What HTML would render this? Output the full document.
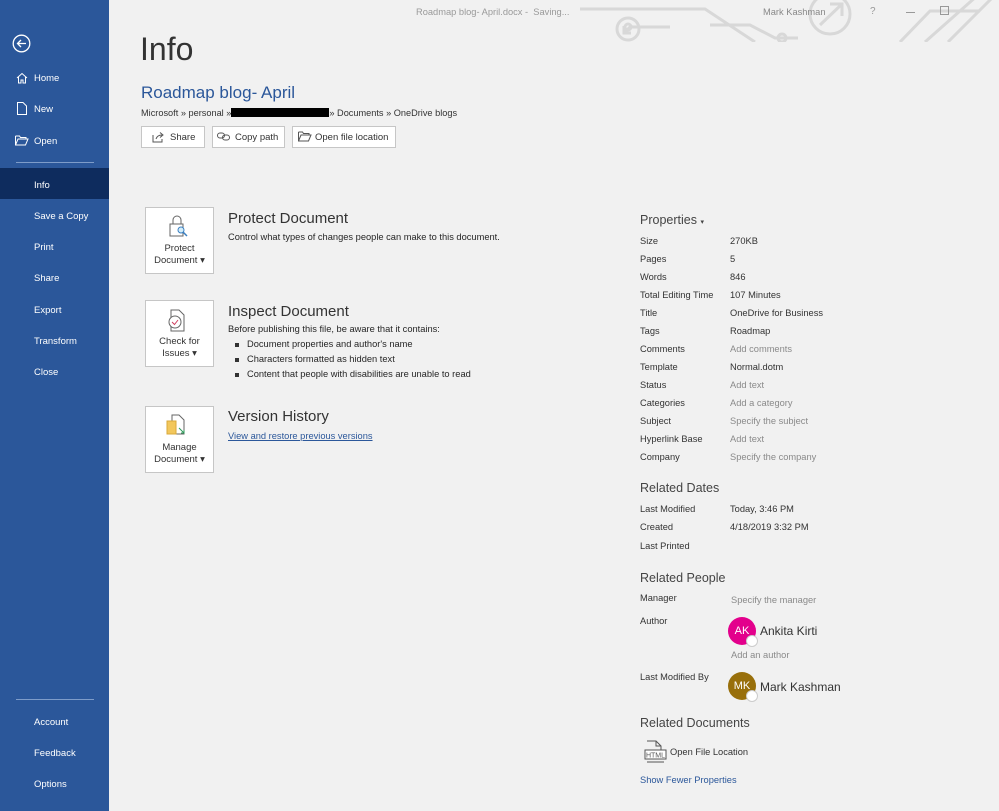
<!DOCTYPE html>
<html><head><style>
*{margin:0;padding:0;box-sizing:border-box}
body{width:999px;height:811px;background:#f1f1f1;font-family:"Liberation Sans",sans-serif;position:relative;overflow:hidden;color:#262626}
.a{position:absolute;white-space:nowrap}
#sb{position:absolute;left:0;top:0;width:109px;height:811px;background:#2b579a;color:#fff;font-size:9.5px}
#sb .a{color:#fff}
.sel{position:absolute;left:0;top:168px;width:109px;height:31px;background:#0e2c5e}
.line{position:absolute;left:16px;width:78px;height:1px;background:#7e9cc9}
.btn{position:absolute;height:22px;background:#fff;border:1px solid #c6c6c6;font-size:9.5px;line-height:21px;padding-left:22px;color:#333}
.big{position:absolute;left:145px;width:69px;height:67px;background:#fff;border:1px solid #c6c6c6;font-size:9.5px;text-align:center;color:#333;line-height:12px}
.h{font-size:15px;color:#333}
.t{font-size:9.3px;color:#262626}
.pl{position:absolute;left:640px;font-size:9.3px;color:#333}
.pv{position:absolute;left:730px;font-size:9.3px;color:#333}
.g{color:#8a8a8a}
.hd{position:absolute;left:640px;font-size:12.5px;color:#444}
.av{position:absolute;left:728px;width:28px;height:28px;border-radius:50%;color:#fff;font-size:11px;text-align:center;line-height:28px}
.av::after{content:"";position:absolute;right:-2px;bottom:-2px;width:10px;height:10px;border-radius:50%;background:#fff;border:1px solid #ccc}
</style></head><body>
<div id="sb">
<svg class="a" style="left:12px;top:34px" width="19" height="19"><circle cx="9.5" cy="9.5" r="8.3" fill="none" stroke="#fff" stroke-width="1.3"/><path d="M14 9.5H5.5M9 6L5.5 9.5 9 13" fill="none" stroke="#fff" stroke-width="1.3"/></svg>
<svg class="a" style="left:16px;top:72px" width="12" height="12"><path d="M1 6L6 1.5 11 6M2.5 5V11H5V8H7V11H9.5V5" fill="none" stroke="#fff"/></svg>
<div class="a" style="left:34px;top:73px">Home</div>
<svg class="a" style="left:16px;top:102px" width="12" height="13"><path d="M1.5 .5H7L10.5 4V12.5H1.5Z" fill="none" stroke="#fff"/></svg>
<div class="a" style="left:34px;top:104px">New</div>
<svg class="a" style="left:15px;top:135px" width="14" height="11"><path d="M.5 1H4.5L5.5 2.5H11V4M.5 1V10H10.5L13 4H3L.5 10" fill="none" stroke="#fff"/></svg>
<div class="a" style="left:34px;top:136px">Open</div>
<div class="line" style="top:162px"></div>
<div class="sel"></div>
<div class="a" style="left:34px;top:180px">Info</div>
<div class="a" style="left:34px;top:211px">Save a Copy</div>
<div class="a" style="left:34px;top:242px">Print</div>
<div class="a" style="left:34px;top:273px">Share</div>
<div class="a" style="left:34px;top:305px">Export</div>
<div class="a" style="left:34px;top:336px">Transform</div>
<div class="a" style="left:34px;top:367px">Close</div>
<div class="line" style="top:699px"></div>
<div class="a" style="left:34px;top:717px">Account</div>
<div class="a" style="left:34px;top:748px">Feedback</div>
<div class="a" style="left:34px;top:779px">Options</div>
</div>
<div class="a" style="left:416px;top:7px;font-size:9.3px;color:#9a9a9a">Roadmap blog- April.docx - &nbsp;Saving...</div>
<svg class="a" style="left:580px;top:0" width="419" height="42" fill="none" stroke="#d8d8d8" stroke-width="3"><path d="M-20 9H125L175 42"/><circle cx="48" cy="29" r="11"/><path d="M44 33L52 25M44 26V33H51"/><path d="M130 25H170L195 38H218"/><circle cx="202" cy="38" r="4"/><path d="M50 27H90"/><circle cx="48" cy="27" r="3"/><circle cx="250" cy="14" r="20"/><path d="M240 25L262 4M250 4H262V16"/><path d="M320 42L350 11H400M345 42L398 -5M368 42L415 -5"/></svg>
<div class="a" style="left:763px;top:7px;font-size:9.3px;color:#888">Mark Kashman</div>
<div class="a" style="left:870px;top:6px;font-size:10px;color:#999">?</div>
<div class="a" style="left:906px;top:12px;width:9px;height:1px;background:#999"></div>
<div class="a" style="left:940px;top:6px;width:9px;height:9px;border:1px solid #999"></div>
<div class="a" style="left:140px;top:31px;font-size:32px;color:#333;font-weight:300">Info</div>
<div class="a" style="left:141px;top:83px;font-size:17px;color:#2b579a">Roadmap blog- April</div>
<div class="a" style="left:141px;top:108px;font-size:9.2px;color:#333">Microsoft » personal »<span style="display:inline-block;width:98px;height:9px;background:#000;vertical-align:-1px"></span>» Documents » OneDrive blogs</div>
<div class="btn" style="left:141px;top:126px;width:64px;padding-left:28px">Share</div>
<svg class="a" style="left:152px;top:131px" width="13" height="12"><path d="M1 4V11H10V8M4 8C5 5 7 4 10 4M8 1.5L11 4 8 6.5" fill="none" stroke="#555"/></svg>
<div class="btn" style="left:212px;top:126px;width:73px">Copy path</div>
<svg class="a" style="left:217px;top:132px" width="14" height="9"><rect x=".5" y="1" width="7" height="5" rx="2.5" fill="none" stroke="#555"/><rect x="5.5" y="3" width="7" height="5" rx="2.5" fill="none" stroke="#555"/></svg>
<div class="btn" style="left:292px;top:126px;width:104px">Open file location</div>
<svg class="a" style="left:298px;top:131px" width="14" height="11"><path d="M.5 1H4.5L5.5 2.5H11V4M.5 1V10H10.5L13 4H3L.5 10" fill="none" stroke="#555"/></svg>

<div class="big" style="top:207px;padding-top:35px">Protect<br>Document ▾</div>
<svg class="a" style="left:168px;top:215px" width="22" height="24"><path d="M5 9V5A4 4 0 0 1 13 5V9M2 9H15V21H2Z" fill="none" stroke="#666"/><circle cx="13" cy="15" r="3" fill="#d6eef9" stroke="#3a7fc1"/><path d="M15 17L19 21" stroke="#3a7fc1" stroke-width="1.5"/></svg>
<div class="a h" style="left:228px;top:210px">Protect Document</div>
<div class="a t" style="left:228px;top:232px">Control what types of changes people can make to this document.</div>

<div class="big" style="top:300px;padding-top:35px">Check for<br>Issues ▾</div>
<svg class="a" style="left:165px;top:309px" width="22" height="24"><path d="M6 1H14L19 6V22H6Z" fill="#fff" stroke="#666"/><circle cx="10" cy="13" r="6" fill="#fff" stroke="#666"/><path d="M7 13L9.5 15.5 13 11" fill="none" stroke="#d04060"/></svg>
<div class="a h" style="left:228px;top:303px">Inspect Document</div>
<div class="a t" style="left:228px;top:324px">Before publishing this file, be aware that it contains:</div>
<div class="a" style="left:235px;top:343px;width:4px;height:4px;background:#333"></div>
<div class="a" style="left:235px;top:358px;width:4px;height:4px;background:#333"></div>
<div class="a" style="left:235px;top:373px;width:4px;height:4px;background:#333"></div>
<div class="a t" style="left:247px;top:339px">Document properties and author's name</div>
<div class="a t" style="left:247px;top:354px">Characters formatted as hidden text</div>
<div class="a t" style="left:247px;top:369px">Content that people with disabilities are unable to read</div>

<div class="big" style="top:406px;padding-top:35px">Manage<br>Document ▾</div>
<svg class="a" style="left:165px;top:414px" width="22" height="24"><path d="M7 1H14L19 6V20H7Z" fill="#fff" stroke="#666"/><rect x="2" y="7" width="9" height="13" fill="#f2c75c" stroke="#d9a93a"/><path d="M14 14L19 19M16 19H19V16" fill="none" stroke="#2e9a5a"/></svg>
<div class="a h" style="left:228px;top:408px">Version History</div>
<div class="a t" style="left:228px;top:431px;color:#2b579a;text-decoration:underline">View and restore previous versions</div>

<div class="hd" style="top:213px">Properties <span style="font-size:7px">▾</span></div>
<div class="pl" style="top:236px">Size</div><div class="pv" style="top:236px">270KB</div>
<div class="pl" style="top:254px">Pages</div><div class="pv" style="top:254px">5</div>
<div class="pl" style="top:272px">Words</div><div class="pv" style="top:272px">846</div>
<div class="pl" style="top:290px">Total Editing Time</div><div class="pv" style="top:290px">107 Minutes</div>
<div class="pl" style="top:308px">Title</div><div class="pv" style="top:308px">OneDrive for Business</div>
<div class="pl" style="top:326px">Tags</div><div class="pv" style="top:326px">Roadmap</div>
<div class="pl" style="top:344px">Comments</div><div class="pv g" style="top:344px">Add comments</div>
<div class="pl" style="top:362px">Template</div><div class="pv" style="top:362px">Normal.dotm</div>
<div class="pl" style="top:380px">Status</div><div class="pv g" style="top:380px">Add text</div>
<div class="pl" style="top:398px">Categories</div><div class="pv g" style="top:398px">Add a category</div>
<div class="pl" style="top:416px">Subject</div><div class="pv g" style="top:416px">Specify the subject</div>
<div class="pl" style="top:434px">Hyperlink Base</div><div class="pv g" style="top:434px">Add text</div>
<div class="pl" style="top:452px">Company</div><div class="pv g" style="top:452px">Specify the company</div>
<div class="hd" style="top:481px">Related Dates</div>
<div class="pl" style="top:504px">Last Modified</div><div class="pv" style="top:504px">Today, 3:46 PM</div>
<div class="pl" style="top:522px">Created</div><div class="pv" style="top:522px">4/18/2019 3:32 PM</div>
<div class="pl" style="top:541px">Last Printed</div>
<div class="hd" style="top:571px">Related People</div>
<div class="pl" style="top:593px">Manager</div><div class="pv g" style="top:595px;left:731px">Specify the manager</div>
<div class="pl" style="top:616px">Author</div>
<div class="av" style="top:617px;background:#e3008c">AK</div>
<div class="a" style="left:760px;top:624px;font-size:12px;color:#333">Ankita Kirti</div>
<div class="pv g" style="top:650px;left:731px">Add an author</div>
<div class="pl" style="top:672px">Last Modified By</div>
<div class="av" style="top:672px;background:#986f0b">MK</div>
<div class="a" style="left:760px;top:680px;font-size:12px;color:#333">Mark Kashman</div>
<div class="hd" style="top:716px">Related Documents</div>
<svg class="a" style="left:644px;top:740px" width="24" height="24"><path d="M3 1H12L17 6V18" fill="none" stroke="#555"/><path d="M12 1V6H17" fill="none" stroke="#555"/><rect x="1" y="10" width="21" height="9" fill="#fff" stroke="#555"/><text x="11.5" y="17.5" font-size="7" text-anchor="middle" fill="#555" font-family="Liberation Sans">HTML</text><path d="M3 22H20" stroke="#555"/></svg>
<div class="a" style="left:670px;top:747px;font-size:9.3px;color:#333">Open File Location</div>
<div class="a" style="left:640px;top:775px;font-size:9.3px;color:#2b579a">Show Fewer Properties</div>
</body></html>
